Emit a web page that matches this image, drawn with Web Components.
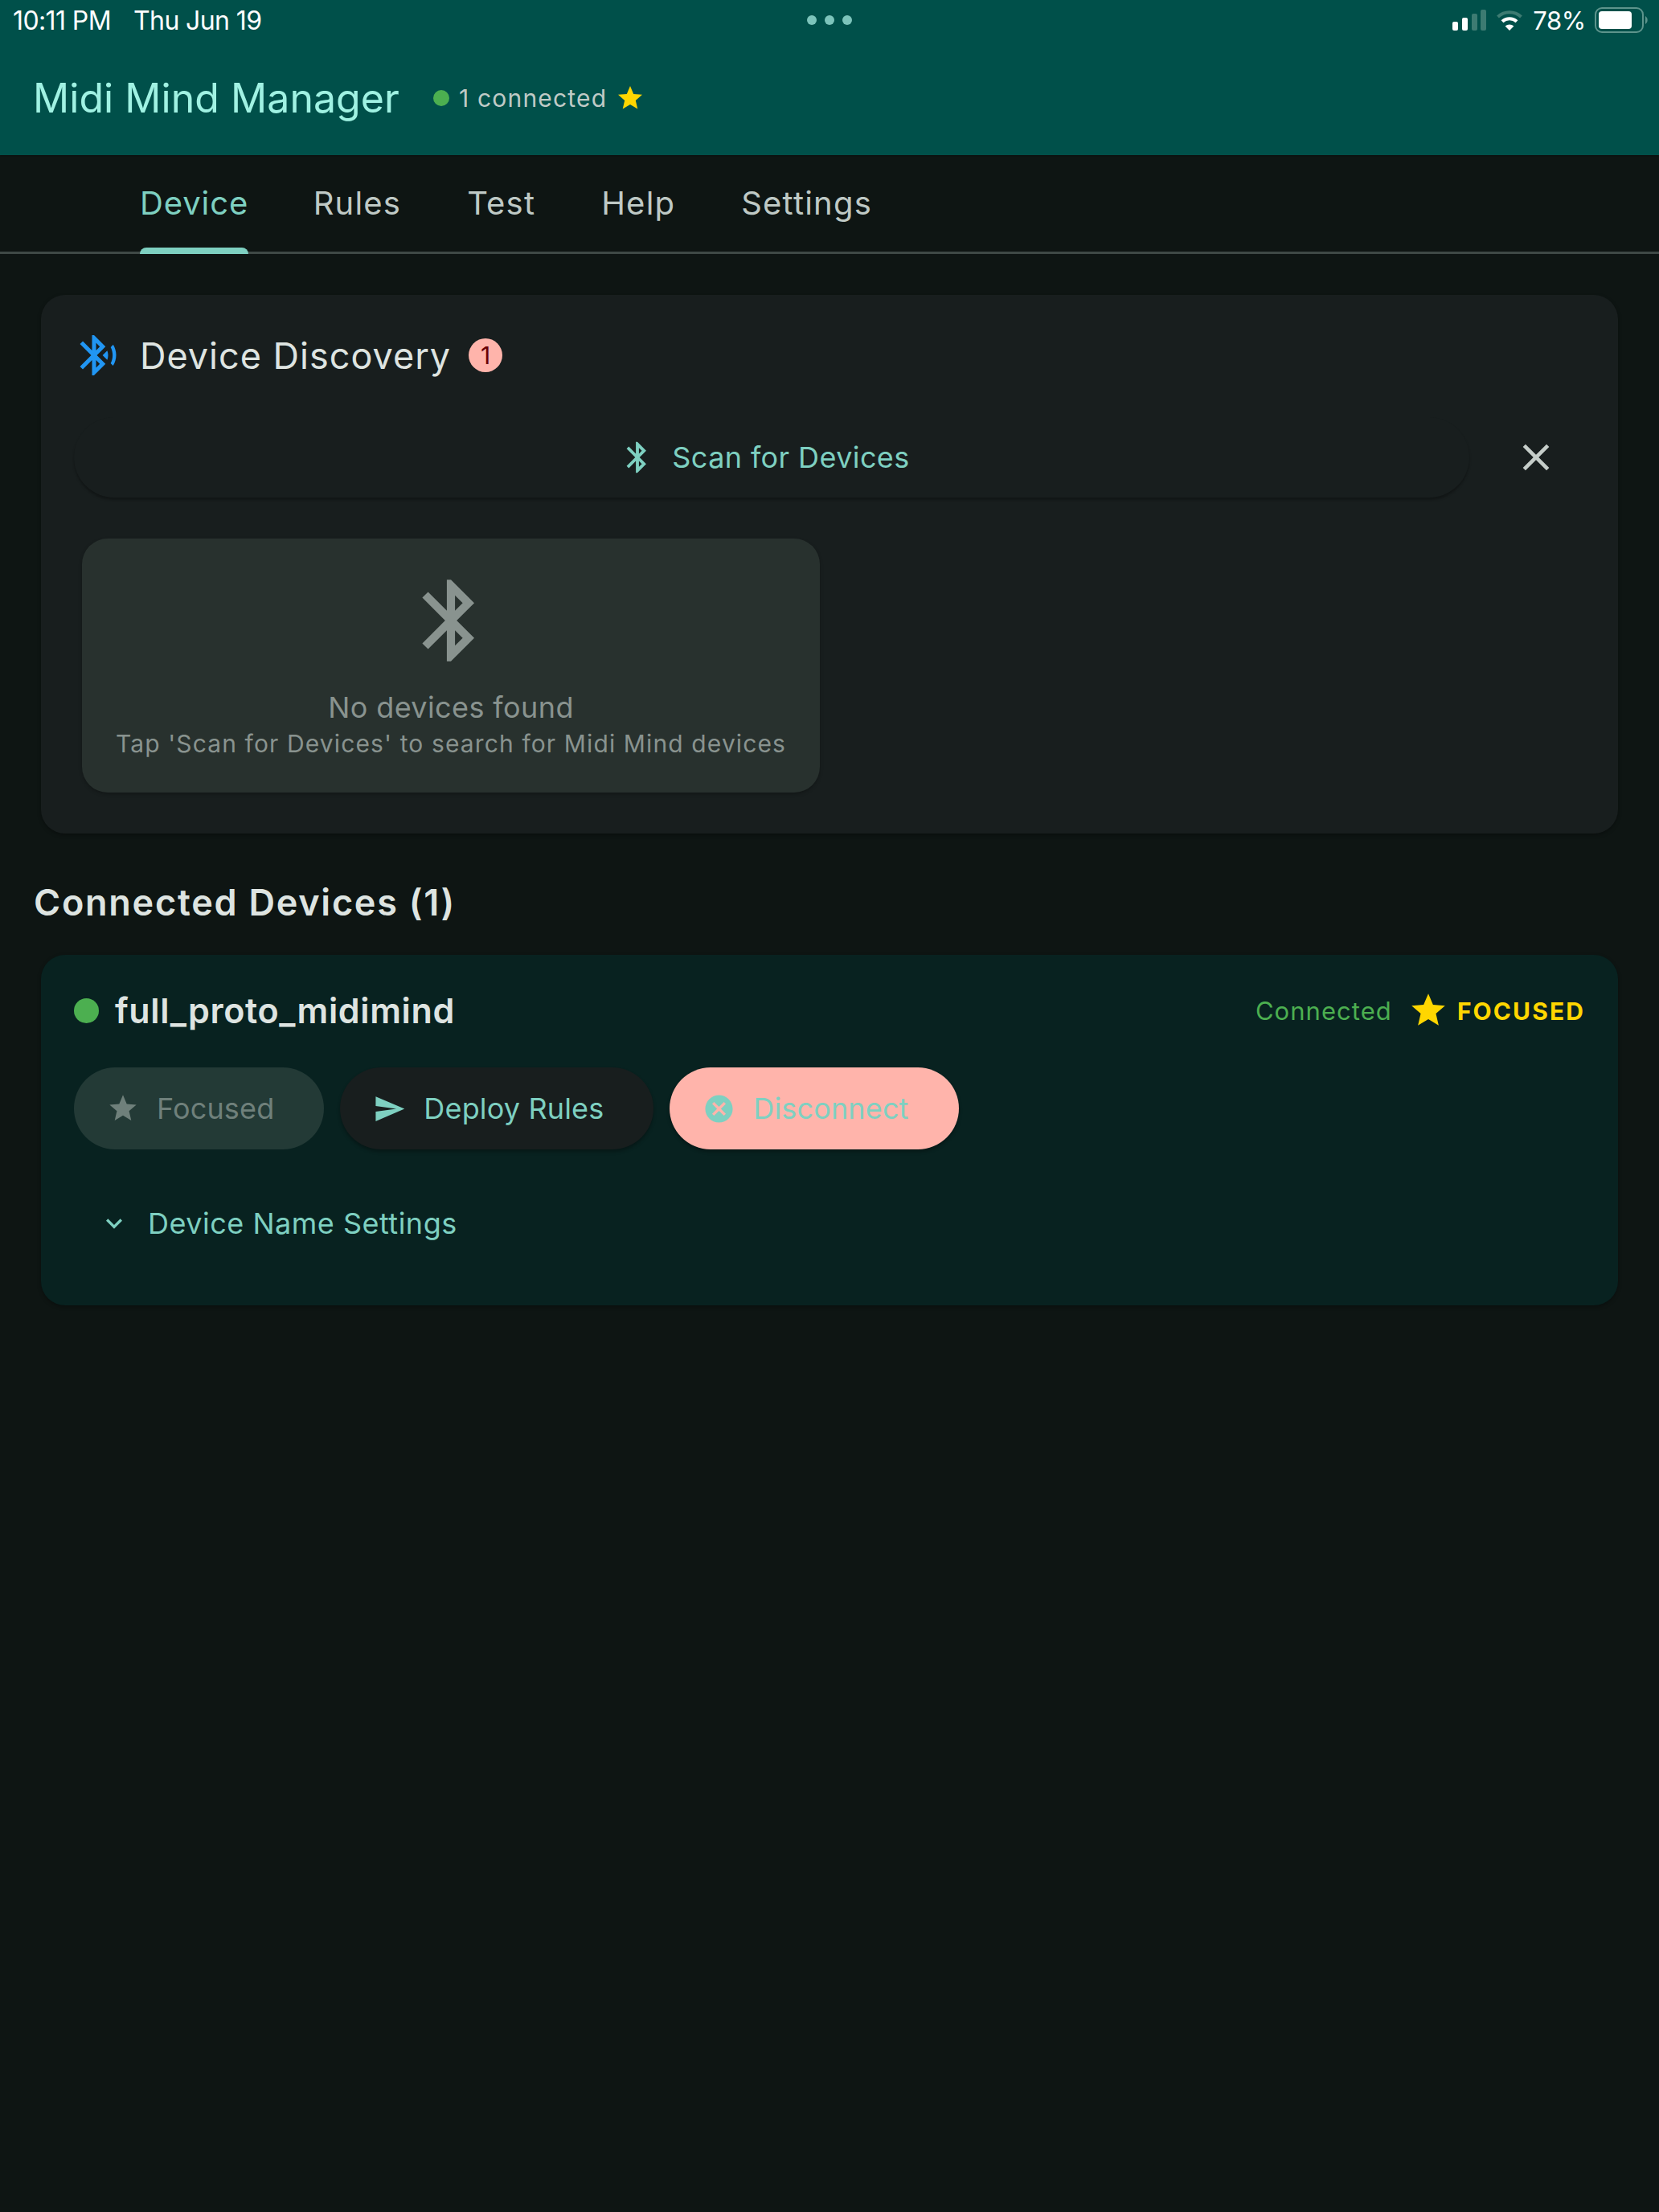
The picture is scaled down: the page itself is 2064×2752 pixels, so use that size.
<!DOCTYPE html>
<html><head><meta charset="utf-8"><title>Midi Mind Manager</title>
<style>
html,body{margin:0;padding:0;background:#0e1513;}
body{font-family:Inter,"Noto Sans",sans-serif;color:#dee4e1;min-height:2752px;}
</style></head><body>
<mm-app></mm-app>
<script>
const P={
bt:"M17.71 7.71L12 2h-1v7.59L6.41 5 5 6.41 10.59 12 5 17.59 6.41 19 11 14.41V22h1l5.71-5.71-4.3-4.29 4.3-4.29zM13 5.83l1.88 1.88L13 9.59V5.83zm1.88 10.46L13 18.17v-3.76l1.88 1.88z",
btsearch:"M14.24 12.01l2.32 2.32c.28-.72.44-1.51.44-2.33 0-.82-.16-1.59-.43-2.31l-2.33 2.32zm5.29-5.3l-1.26 1.26c.63 1.21.98 2.57.98 4.02s-.36 2.82-.98 4.02l1.2 1.2c.97-1.54 1.53-3.36 1.53-5.31-.01-1.89-.55-3.67-1.47-5.19zm-3.82 1L10 2H9v7.59L4.41 5 3 6.41 8.59 12 3 17.59 4.41 19 9 14.41V22h1l5.71-5.71L11.41 12l4.3-4.29zM11 5.83l1.88 1.88L11 9.59V5.83zm1.88 10.46L11 18.17v-3.76l1.88 1.88z",
close:"M19 6.41L17.59 5 12 10.59 6.41 5 5 6.41 10.59 12 5 17.59 6.41 19 12 13.41 17.59 19 19 17.59 13.41 12z",
star:"M12 17.27L18.18 21l-1.64-7.03L22 9.24l-7.19-.61L12 2 9.19 8.63 2 9.24l5.46 4.73L5.82 21z",
send:"M2.01 21L23 12 2.01 3 2 10l15 2-15 2z",
cancel:"M12 2C6.47 2 2 6.47 2 12s4.47 10 10 10 10-4.47 10-10S17.53 2 12 2zm5 13.59L15.59 17 12 13.41 8.41 17 7 15.59 10.59 12 7 8.41 8.41 7 12 10.59 15.59 7 17 8.41 13.41 12 17 15.59z",
chev:"M16.59 8.59L12 13.17 7.41 8.59 6 10l6 6 6-6z"};
function def(name,html,extra){
  customElements.define(name,class extends HTMLElement{
    constructor(){super();const r=this.attachShadow({mode:"open"});r.innerHTML=html;if(extra)extra.call(this,r);}
  });
}
class MmIcon extends HTMLElement{
  connectedCallback(){
    if(this.shadowRoot)return;
    const s=this.getAttribute("size")||48,c=this.getAttribute("color")||"currentColor",n=this.getAttribute("name");
    this.attachShadow({mode:"open"}).innerHTML=`<style>:host{display:block;flex:none;width:${s}px;height:${s}px;line-height:0}svg{display:block;width:100%;height:100%}</style><svg viewBox="0 0 24 24" fill="${c}"><path d="${P[n]}"/></svg>`;
  }
}
customElements.define("mm-icon",MmIcon);

def("mm-status",`<style>
:host{display:flex;align-items:center;height:50px;padding:0 12px 0 16px;color:#fff;font-family:Inter,sans-serif;font-size:32px;position:relative}
.l{flex:1;display:flex;gap:28px;letter-spacing:-.6px}
.dots{flex:none;display:flex;gap:10px;margin-left:-4px}
.dots i{display:block;width:12px;height:12px;border-radius:50%;background:#7cc4bb}
.r{flex:1;display:flex;justify-content:flex-end;align-items:center}
.pct{font-size:31px;margin:0 11px 0 12px;letter-spacing:-.3px}
svg{display:block}
</style>
<div class="l"><span>10:11 PM</span><span>Thu Jun 19</span></div>
<div class="dots"><i></i><i></i><i></i></div>
<div class="r">
<svg width="42" height="26" viewBox="0 0 42 26"><rect x="0" y="15" width="7" height="11" rx="2" fill="#fff"/><rect x="12" y="10" width="7" height="16" rx="2" fill="#fff"/><rect x="24" y="5" width="7" height="21" rx="2" fill="#3d7b72"/><rect x="35" y="0" width="7" height="26" rx="2" fill="#3d7b72"/></svg>
<svg style="margin-left:12px" width="34" height="26" viewBox="0 0 34 26"><path d="M2.5 9A21 21 0 0 1 31.5 9" fill="none" stroke="#3d7b72" stroke-width="4"/><path d="M8 14.8A13 13 0 0 1 26 14.8" fill="none" stroke="#fff" stroke-width="4"/><path d="M17 26L11.6 20.5A8 8 0 0 1 22.4 20.5Z" fill="#fff"/></svg>
<span class="pct">78%</span>
<svg width="68" height="32" viewBox="0 0 68 32"><rect x="1" y="1" width="59" height="30" rx="8" fill="none" stroke="#5d948c" stroke-width="2"/><rect x="5" y="5" width="41" height="22" rx="4" fill="#fff"/><path d="M63 11A6 6 0 0 1 63 21Z" fill="#5d948c"/></svg>
</div>`);

def("mm-appbar",`<style>
:host{display:block;background:#00504a;height:193px;box-sizing:border-box;box-shadow:0 1px 2px rgba(0,0,0,.3)}
.row{display:flex;align-items:center;height:143px;padding:0 42px 0 41px;box-sizing:border-box}
h1{margin:0;font-weight:400;font-size:50px;color:#a0f2e3;letter-spacing:.05px;line-height:60px}
.st{display:flex;align-items:center;margin-left:42px;font-size:30px;color:#bfcac6;letter-spacing:1.2px}
.dot{width:20px;height:20px;border-radius:50%;background:#4caf50;margin-right:12px}
.st mm-icon{margin-left:11px}
</style>
<mm-status></mm-status>
<div class="row"><h1>Midi Mind Manager</h1>
<div class="st"><span class="dot"></span><span>1 connected</span><mm-icon name="star" size="36" color="#ffd600"></mm-icon></div></div>`);

def("mm-tab",`<style>
:host{display:flex;flex-direction:column;margin:0 41px;font-size:40px;color:#bfc9c5;letter-spacing:1.2px}
:host([active]){color:#7ed0c1;letter-spacing:.9px;margin-right:39.5px}
.t{flex:1;display:flex;align-items:center;padding-top:4px}
.b{height:8px;border-radius:8px 8px 0 0;margin-bottom:-3px}
:host([active]) .b{background:#7ed0c1}
</style><div class="t"><slot></slot></div><div class="b"></div>`);
def("mm-tabs",`<style>
:host{display:flex;height:120px;padding-left:133px;border-bottom:3px solid #3f4946}
</style><slot></slot>`);

def("mm-card",`<style>
:host{display:block;border-radius:30px;background:var(--bg,#181e1e);margin:0 9px;box-shadow:0 2px 5px rgba(0,0,0,.3);padding:var(--pad,45px 41px 51px)}
</style><slot></slot>`);

def("mm-discovery",`<style>
:host{display:block}
.title{display:flex;align-items:center;height:60px}
.title span.t{margin-left:22px;font-size:45px;color:#dee4e1;letter-spacing:1px}
.badge{margin-left:22px;width:42px;height:42px;border-radius:50%;background:#ffb4ab;color:#690005;font-size:30px;display:flex;align-items:center;justify-content:center}
.scan{display:flex;align-items:center;margin-top:47px;height:100px;padding-right:19px}
.btn{flex:1;height:100px;box-sizing:border-box;display:flex;align-items:center;justify-content:center;gap:20px;padding:0 46px 0 28px;border-radius:50px;background:#181e1e;box-shadow:0 3px 3px rgba(0,0,0,.28);color:#7ed0c1;font-size:36px;letter-spacing:.4px}
.x{width:84px;margin-left:41px;display:flex;justify-content:center}
.empty{box-sizing:border-box;width:918px;height:316px;margin:51px 0 0 10px;border-radius:32px;background:#28312e;box-shadow:0 2px 4px rgba(0,0,0,.25);padding-top:41px;display:flex;flex-direction:column;align-items:center;color:#89938f;text-align:center}
.a{font-size:36px;line-height:44px;margin-top:25px;letter-spacing:.4px}
.b{font-size:30px;line-height:40px;margin-top:3px;letter-spacing:1.12px}
</style>
<div class="title"><mm-icon name="btsearch" size="60" color="#2196f3"></mm-icon><span class="t">Device Discovery</span><span class="badge">1</span></div>
<div class="scan"><div class="btn"><mm-icon name="bt" size="46" color="#7ed0c1"></mm-icon><span>Scan for Devices</span></div><div class="x"><mm-icon name="close" size="56" color="#c5cdc9"></mm-icon></div></div>
<div class="empty"><mm-icon name="bt" size="122" color="#89938f"></mm-icon><div class="a">No devices found</div><div class="b">Tap 'Scan for Devices' to search for Midi Mind devices</div></div>`);

def("mm-btn",`<style>
:host{display:flex;align-items:center;gap:22px;height:102px;box-sizing:border-box;padding:0 62px 0 41px;border-radius:51px;font-size:36px;letter-spacing:.15px;background:var(--b);color:var(--c);box-shadow:var(--s,0 3px 4px rgba(0,0,0,.3))}
</style><slot></slot>`);

def("mm-device",`<style>
:host{display:block}
.head{display:flex;align-items:center;height:60px}
.dot{width:31px;height:31px;border-radius:50%;background:#4caf50}
.name{margin-left:20px;font-size:43px;font-weight:600;color:#dee4e1;letter-spacing:.65px;flex:1}
.conn{font-size:31px;color:#4caf50;letter-spacing:1.05px}
.head mm-icon{margin:0 11px 0 20px}
.foc{font-size:30px;font-weight:700;color:#ffd600;letter-spacing:2.1px;padding-top:2px}
.btns{display:flex;gap:20px;margin-top:41px}
.exp{display:flex;align-items:center;gap:22px;height:96px;margin-top:44px;padding-left:30px;color:#7ed0c1;font-size:36px;letter-spacing:.5px}
</style>
<div class="head"><span class="dot"></span><span class="name">full_proto_midimind</span><span class="conn">Connected</span><mm-icon name="star" size="50" color="#ffd600"></mm-icon><span class="foc">FOCUSED</span></div>
<div class="btns">
<mm-btn style="--b:#233a36;--c:#6f807b;--s:none"><mm-icon name="star" size="40" color="#6f807b"></mm-icon><span>Focused</span></mm-btn>
<mm-btn style="--b:#181e1e;--c:#7ed0c1"><mm-icon name="send" size="41" color="#7ed0c1"></mm-icon><span>Deploy Rules</span></mm-btn>
<mm-btn style="--b:#ffb4ab;--c:#7ed0c1"><mm-icon name="cancel" size="41" color="#7ed0c1"></mm-icon><span>Disconnect</span></mm-btn>
</div>
<div class="exp"><mm-icon name="chev" size="40" color="#7ed0c1"></mm-icon><span>Device Name Settings</span></div>`);

def("mm-app",`<style>
:host{display:block}
main{display:block;padding:51px 42px 0}
h2{margin:0;font-size:45px;line-height:60px;font-weight:600;color:#dee4e1;letter-spacing:1.75px;padding:56px 0 35px}
</style>
<mm-appbar></mm-appbar>
<mm-tabs><mm-tab active>Device</mm-tab><mm-tab>Rules</mm-tab><mm-tab>Test</mm-tab><mm-tab>Help</mm-tab><mm-tab>Settings</mm-tab></mm-tabs>
<main>
<mm-card><mm-discovery></mm-discovery></mm-card>
<h2>Connected Devices (1)</h2>
<mm-card style="--bg:#082220;--pad:39px 41px 54px"><mm-device></mm-device></mm-card>
</main>`);
</script>
</body></html>
